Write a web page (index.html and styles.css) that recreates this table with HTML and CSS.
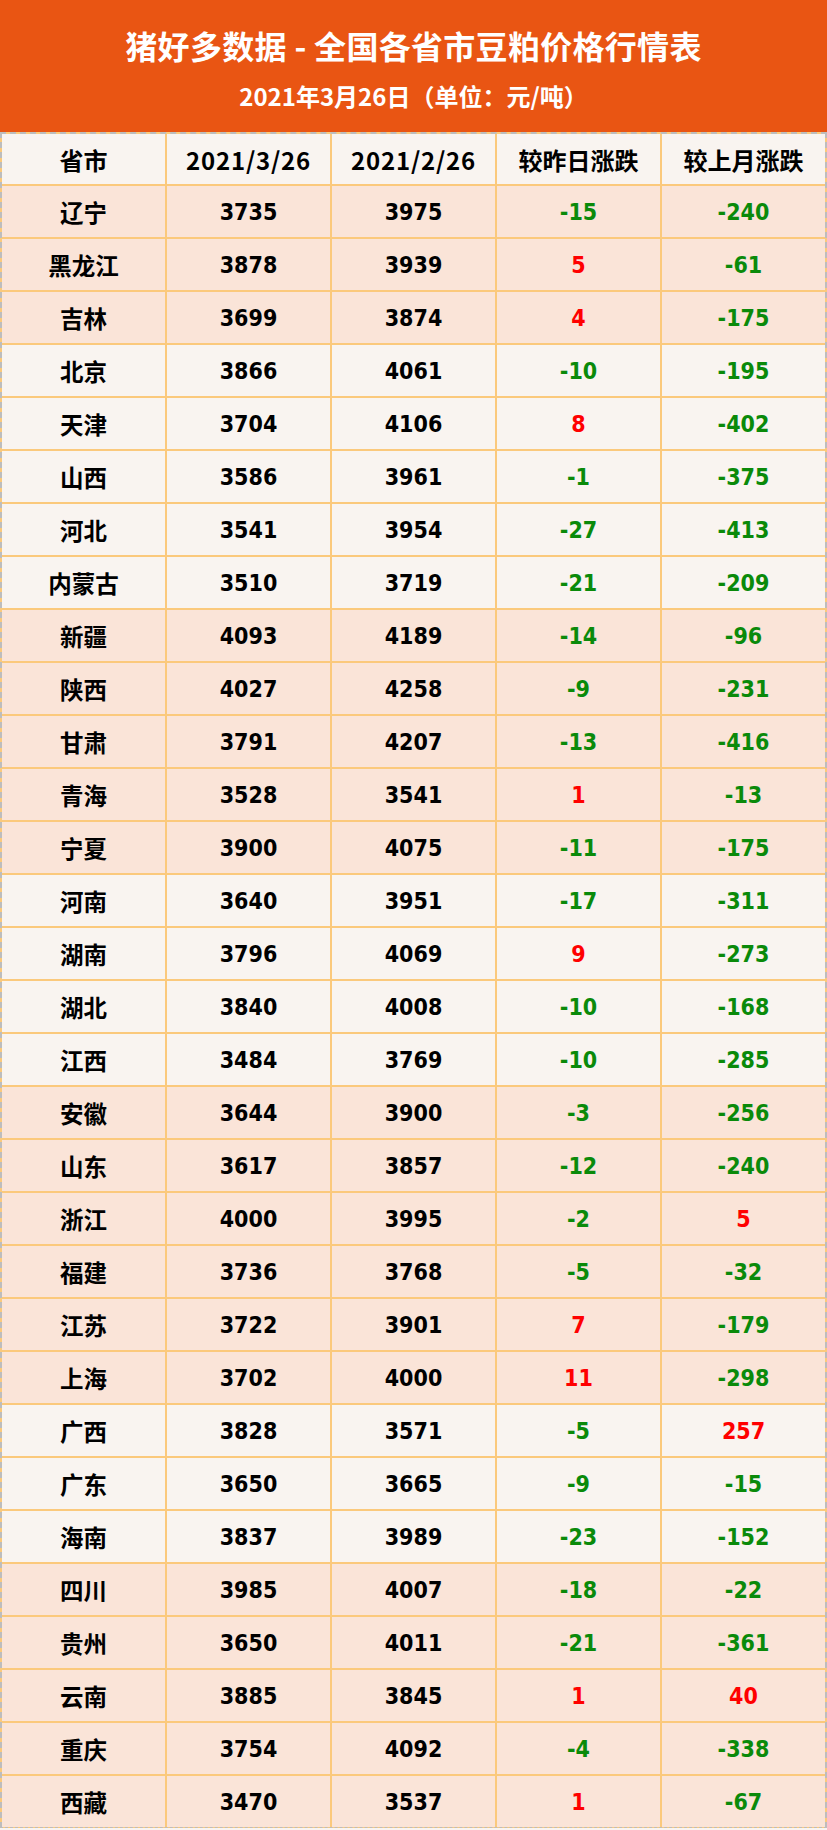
FILE: index.html
```html
<!DOCTYPE html>
<html lang="zh-CN">
<head>
<meta charset="utf-8">
<title>猪好多数据 - 全国各省市豆粕价格行情表</title>
<link rel="stylesheet" href="styles.css">
</head>
<body>
<div class="banner">
  <div class="title">猪好多数据 - 全国各省市豆粕价格行情表</div>
  <div class="subtitle">2021年3月26日（单位：元/吨）</div>
</div>
<div class="grid">
  <div class="row head"><div>省市</div><div class="num">2021/3/26</div><div class="num">2021/2/26</div><div>较昨日涨跌</div><div>较上月涨跌</div></div>
  <div class="row pink"><div class="cn">辽宁</div><div>3735</div><div>3975</div><div class="dn">-15</div><div class="dn">-240</div></div>
  <div class="row pink"><div class="cn">黑龙江</div><div>3878</div><div>3939</div><div class="up">5</div><div class="dn">-61</div></div>
  <div class="row pink"><div class="cn">吉林</div><div>3699</div><div>3874</div><div class="up">4</div><div class="dn">-175</div></div>
  <div class="row light"><div class="cn">北京</div><div>3866</div><div>4061</div><div class="dn">-10</div><div class="dn">-195</div></div>
  <div class="row light"><div class="cn">天津</div><div>3704</div><div>4106</div><div class="up">8</div><div class="dn">-402</div></div>
  <div class="row light"><div class="cn">山西</div><div>3586</div><div>3961</div><div class="dn">-1</div><div class="dn">-375</div></div>
  <div class="row light"><div class="cn">河北</div><div>3541</div><div>3954</div><div class="dn">-27</div><div class="dn">-413</div></div>
  <div class="row light"><div class="cn">内蒙古</div><div>3510</div><div>3719</div><div class="dn">-21</div><div class="dn">-209</div></div>
  <div class="row pink"><div class="cn">新疆</div><div>4093</div><div>4189</div><div class="dn">-14</div><div class="dn">-96</div></div>
  <div class="row pink"><div class="cn">陕西</div><div>4027</div><div>4258</div><div class="dn">-9</div><div class="dn">-231</div></div>
  <div class="row pink"><div class="cn">甘肃</div><div>3791</div><div>4207</div><div class="dn">-13</div><div class="dn">-416</div></div>
  <div class="row pink"><div class="cn">青海</div><div>3528</div><div>3541</div><div class="up">1</div><div class="dn">-13</div></div>
  <div class="row pink"><div class="cn">宁夏</div><div>3900</div><div>4075</div><div class="dn">-11</div><div class="dn">-175</div></div>
  <div class="row light"><div class="cn">河南</div><div>3640</div><div>3951</div><div class="dn">-17</div><div class="dn">-311</div></div>
  <div class="row light"><div class="cn">湖南</div><div>3796</div><div>4069</div><div class="up">9</div><div class="dn">-273</div></div>
  <div class="row light"><div class="cn">湖北</div><div>3840</div><div>4008</div><div class="dn">-10</div><div class="dn">-168</div></div>
  <div class="row light"><div class="cn">江西</div><div>3484</div><div>3769</div><div class="dn">-10</div><div class="dn">-285</div></div>
  <div class="row pink"><div class="cn">安徽</div><div>3644</div><div>3900</div><div class="dn">-3</div><div class="dn">-256</div></div>
  <div class="row pink"><div class="cn">山东</div><div>3617</div><div>3857</div><div class="dn">-12</div><div class="dn">-240</div></div>
  <div class="row pink"><div class="cn">浙江</div><div>4000</div><div>3995</div><div class="dn">-2</div><div class="up">5</div></div>
  <div class="row pink"><div class="cn">福建</div><div>3736</div><div>3768</div><div class="dn">-5</div><div class="dn">-32</div></div>
  <div class="row pink"><div class="cn">江苏</div><div>3722</div><div>3901</div><div class="up">7</div><div class="dn">-179</div></div>
  <div class="row pink"><div class="cn">上海</div><div>3702</div><div>4000</div><div class="up">11</div><div class="dn">-298</div></div>
  <div class="row light"><div class="cn">广西</div><div>3828</div><div>3571</div><div class="dn">-5</div><div class="up">257</div></div>
  <div class="row light"><div class="cn">广东</div><div>3650</div><div>3665</div><div class="dn">-9</div><div class="dn">-15</div></div>
  <div class="row light"><div class="cn">海南</div><div>3837</div><div>3989</div><div class="dn">-23</div><div class="dn">-152</div></div>
  <div class="row pink"><div class="cn">四川</div><div>3985</div><div>4007</div><div class="dn">-18</div><div class="dn">-22</div></div>
  <div class="row pink"><div class="cn">贵州</div><div>3650</div><div>4011</div><div class="dn">-21</div><div class="dn">-361</div></div>
  <div class="row pink"><div class="cn">云南</div><div>3885</div><div>3845</div><div class="up">1</div><div class="up">40</div></div>
  <div class="row pink"><div class="cn">重庆</div><div>3754</div><div>4092</div><div class="dn">-4</div><div class="dn">-338</div></div>
  <div class="row pink"><div class="cn">西藏</div><div>3470</div><div>3537</div><div class="up">1</div><div class="dn">-67</div></div>
</div>
</body>
</html>
```

FILE: styles.css
```css
html, body {
  margin: 0;
  padding: 0;
  background: #f9f4f0;
}
body {
  width: 827px;
  font-family: "Noto Sans CJK SC", "DejaVu Sans", sans-serif;
}
.banner {
  height: 132px;
  background: #e95513;
  color: #ffffff;
  display: flex;
  flex-direction: column;
  align-items: center;
  font-weight: 700;
}
.title {
  font-size: 32px;
  line-height: 32px;
  margin-top: 29px;
  letter-spacing: 0.3px;
}
.subtitle {
  font-size: 24px;
  line-height: 24px;
  margin-top: 23px;
}
.grid {
  display: grid;
  grid-template-columns: repeat(5, 1fr);
  grid-template-rows: 50px repeat(31, 51px);
  gap: 2px;
  background: #fbc97c;
  border: 2px dashed #bdbdbd;
  border-bottom-width: 1px;
}
.row {
  display: contents;
}
.row > div {
  display: flex;
  align-items: center;
  justify-content: center;
  font-weight: 700;
  color: #000000;
  font-family: "DejaVu Sans Condensed", "DejaVu Sans", "Noto Sans CJK SC", sans-serif;
  font-size: 23px;
}
.row > div.cn {
  font-family: "Noto Sans CJK SC", sans-serif;
  font-size: 23.5px;
}
.head > div {
  background: #f9f4f0;
  font-family: "Noto Sans CJK SC", sans-serif;
  font-size: 24px;
}
.head > div.num {
  letter-spacing: 0.8px;
}
.pink > div {
  background: #fae4d8;
}
.light > div {
  background: #f9f4f0;
}
.row > div.dn {
  color: #0a8a0a;
}
.row > div.up {
  color: #ff0000;
}
```
